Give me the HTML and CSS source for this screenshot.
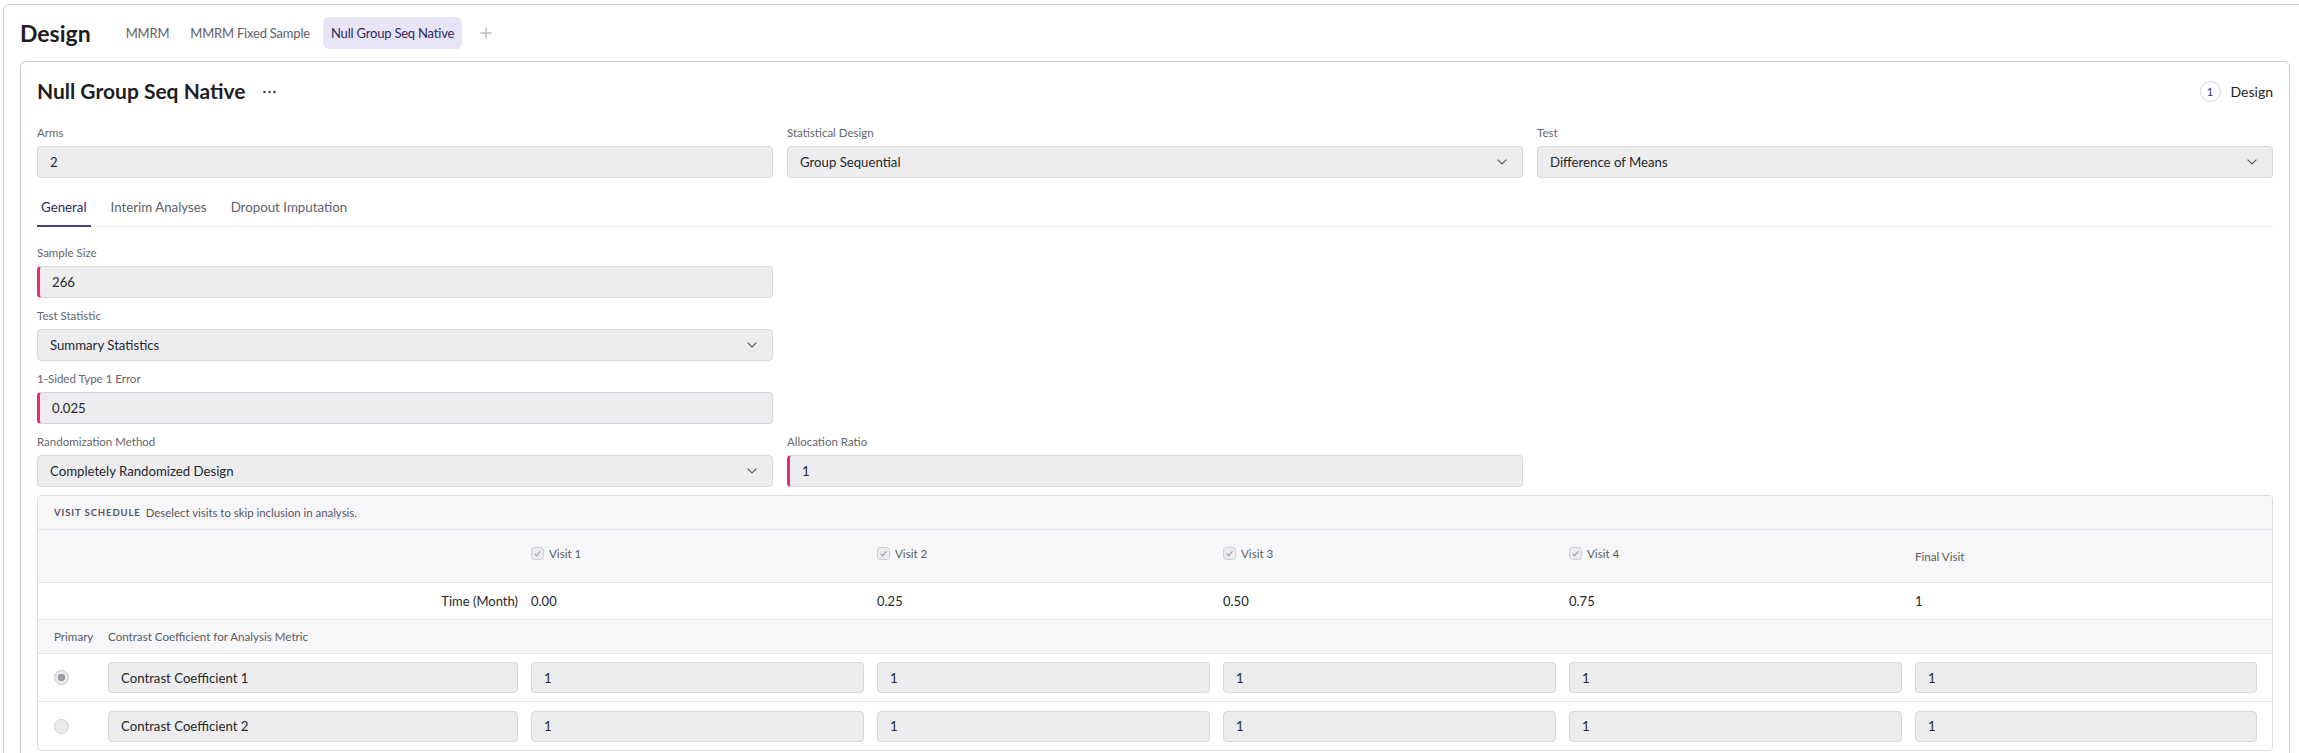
FILE: index.html
```html
<!DOCTYPE html>
<html lang="en">
<head>
<meta charset="utf-8">
<title>Design</title>
<link rel="stylesheet" href="styles.css">
</head>
<body>
<div class="frame">
  <header class="topbar">
    <h1 class="page-title">Design</h1>
    <nav class="doc-tabs">
      <span class="doc-tab">MMRM</span>
      <span class="doc-tab">MMRM Fixed Sample</span>
      <span class="doc-tab active">Null Group Seq Native</span>
      <span class="doc-add"><svg width="12" height="12" viewBox="0 0 12 12"><path d="M6 0.5v11M0.5 6h11" stroke="#bdbdc2" stroke-width="1.4" fill="none"/></svg></span>
    </nav>
  </header>

  <section class="card">
    <div class="card-head">
      <div class="card-title">
        <h2>Null Group Seq Native</h2>
        <span class="more"><svg width="13" height="4" viewBox="0 0 13 4"><circle cx="1.5" cy="2" r="1.3" fill="#444"/><circle cx="6.5" cy="2" r="1.3" fill="#444"/><circle cx="11.5" cy="2" r="1.3" fill="#444"/></svg></span>
      </div>
      <div class="step"><span class="step-num">1</span><span class="step-label">Design</span></div>
    </div>

    <div class="grid3 top-fields">
      <div class="field">
        <div class="label">Arms</div>
        <div class="input">2</div>
      </div>
      <div class="field">
        <div class="label">Statistical Design</div>
        <div class="input select"><span>Group Sequential</span><svg class="chev" width="10" height="6" viewBox="0 0 10 6"><path d="M0.6 0.6l4.4 4.4 4.4-4.4" fill="none" stroke="#555" stroke-width="1.1"/></svg></div>
      </div>
      <div class="field">
        <div class="label">Test</div>
        <div class="input select"><span>Difference of Means</span><svg class="chev" width="10" height="6" viewBox="0 0 10 6"><path d="M0.6 0.6l4.4 4.4 4.4-4.4" fill="none" stroke="#555" stroke-width="1.1"/></svg></div>
      </div>
    </div>

    <div class="sub-tabs">
      <span class="sub-tab active">General</span>
      <span class="sub-tab">Interim Analyses</span>
      <span class="sub-tab">Dropout Imputation</span>
    </div>

    <div class="form-rows">
      <div class="grid3">
        <div class="field">
          <div class="label">Sample Size</div>
          <div class="input required">266</div>
        </div>
      </div>
      <div class="grid3">
        <div class="field">
          <div class="label">Test Statistic</div>
          <div class="input select"><span>Summary Statistics</span><svg class="chev" width="10" height="6" viewBox="0 0 10 6"><path d="M0.6 0.6l4.4 4.4 4.4-4.4" fill="none" stroke="#555" stroke-width="1.1"/></svg></div>
        </div>
      </div>
      <div class="grid3">
        <div class="field">
          <div class="label">1-Sided Type 1 Error</div>
          <div class="input required">0.025</div>
        </div>
      </div>
      <div class="grid3">
        <div class="field">
          <div class="label">Randomization Method</div>
          <div class="input select"><span>Completely Randomized Design</span><svg class="chev" width="10" height="6" viewBox="0 0 10 6"><path d="M0.6 0.6l4.4 4.4 4.4-4.4" fill="none" stroke="#555" stroke-width="1.1"/></svg></div>
        </div>
        <div class="field">
          <div class="label">Allocation Ratio</div>
          <div class="input required">1</div>
        </div>
      </div>
    </div>

    <div class="visit-box">
      <div class="vhead"><span class="vhead-title">VISIT SCHEDULE</span><span class="vhead-desc">Deselect visits to skip inclusion in analysis.</span></div>

      <div class="vrow vgrid visits">
        <span></span><span></span>
        <span class="visit"><svg class="cb" width="13" height="13" viewBox="0 0 13 13"><rect x="0.5" y="0.5" width="12" height="12" rx="3" fill="#ececee" stroke="#cfcfd3"/><path d="M3.6 6.8l2 1.9 3.8-4.3" fill="none" stroke="#9a9a9f" stroke-width="1.1"/></svg>Visit 1</span>
        <span class="visit"><svg class="cb" width="13" height="13" viewBox="0 0 13 13"><rect x="0.5" y="0.5" width="12" height="12" rx="3" fill="#ececee" stroke="#cfcfd3"/><path d="M3.6 6.8l2 1.9 3.8-4.3" fill="none" stroke="#9a9a9f" stroke-width="1.1"/></svg>Visit 2</span>
        <span class="visit"><svg class="cb" width="13" height="13" viewBox="0 0 13 13"><rect x="0.5" y="0.5" width="12" height="12" rx="3" fill="#ececee" stroke="#cfcfd3"/><path d="M3.6 6.8l2 1.9 3.8-4.3" fill="none" stroke="#9a9a9f" stroke-width="1.1"/></svg>Visit 3</span>
        <span class="visit"><svg class="cb" width="13" height="13" viewBox="0 0 13 13"><rect x="0.5" y="0.5" width="12" height="12" rx="3" fill="#ececee" stroke="#cfcfd3"/><path d="M3.6 6.8l2 1.9 3.8-4.3" fill="none" stroke="#9a9a9f" stroke-width="1.1"/></svg>Visit 4</span>
        <span class="visit final">Final Visit</span>
      </div>

      <div class="vrow vgrid times">
        <span></span>
        <span class="time-label">Time (Month)</span>
        <span>0.00</span><span>0.25</span><span>0.50</span><span>0.75</span><span>1</span>
      </div>

      <div class="vrow vgrid colhead">
        <span>Primary</span>
        <span>Contrast Coefficient for Analysis Metric</span>
        <span></span><span></span><span></span><span></span><span></span>
      </div>

      <div class="vrow vgrid coef">
        <span class="radio checked"></span>
        <div class="input small">Contrast Coefficient 1</div>
        <div class="input small">1</div>
        <div class="input small">1</div>
        <div class="input small">1</div>
        <div class="input small">1</div>
        <div class="input small">1</div>
      </div>

      <div class="vrow vgrid coef last">
        <span class="radio"></span>
        <div class="input small">Contrast Coefficient 2</div>
        <div class="input small">1</div>
        <div class="input small">1</div>
        <div class="input small">1</div>
        <div class="input small">1</div>
        <div class="input small">1</div>
      </div>
    </div>
  </section>
</div>
</body>
</html>
```

FILE: styles.css
```css
html, body {
  overflow: hidden;
}

body {
  margin: 0;
  background: #ffffff;
  color: #222226;
  font-family: Lato, "Liberation Sans", sans-serif;
}

.frame {
  box-sizing: border-box;
  width: 2304px;
  margin: 4px 0 0 3px;
  padding: 12px 16px 16px;
  border: 1px solid #cbc5e9;
  border-radius: 6px;
}

/* top bar */
.topbar {
  display: flex;
  align-items: center;
  height: 32px;
}

.page-title {
  margin: 0 27px 0 0;
  font-size: 23px;
  font-weight: 700;
  line-height: 32px;
  color: #1e1e22;
}

.doc-tabs {
  display: flex;
  align-items: center;
  gap: 5px;
  height: 32px;
}

.doc-tab {
  display: flex;
  align-items: center;
  height: 32px;
  padding: 0 8px;
  border-radius: 6px;
  font-size: 13px;
  letter-spacing: -0.2px;
  color: #5f5f68;
}

.doc-tab.active {
  background: #e8e4f6;
  color: #2d2960;
}

.doc-add {
  display: flex;
  align-items: center;
  margin-left: 13px;
}

/* card */
.card {
  margin-top: 12px;
  padding: 14px 16px 16px;
  border: 1px solid #cdc7ea;
  border-radius: 6px;
}

.card-head {
  display: flex;
  align-items: center;
  justify-content: space-between;
  height: 30px;
}

.card-title {
  display: flex;
  align-items: center;
  gap: 17px;
}

.card-title h2 {
  margin: 0;
  font-size: 21px;
  font-weight: 700;
  line-height: 30px;
  color: #1e1e22;
}

.more {
  display: flex;
  align-items: center;
  padding-top: 2px;
}

.step {
  display: flex;
  align-items: center;
  gap: 10px;
}

.step-num {
  box-sizing: border-box;
  display: flex;
  align-items: center;
  justify-content: center;
  width: 21px;
  height: 21px;
  border: 1.5px solid #d6d2ef;
  border-radius: 50%;
  font-size: 12px;
  color: #3a3482;
}

.step-label {
  font-size: 14px;
  color: #222226;
}

/* fields */
.grid3 {
  display: grid;
  grid-template-columns: repeat(3, 1fr);
  column-gap: 14px;
}

.top-fields {
  margin-top: 19px;
}

.label {
  margin-bottom: 5px;
  font-size: 11.5px;
  line-height: 16px;
  color: #66666e;
}

.input {
  box-sizing: border-box;
  display: flex;
  align-items: center;
  height: 32px;
  padding: 0 12px;
  border: 1px solid #d7d7db;
  border-radius: 4px;
  background: #ededf0;
  font-size: 13.2px;
  color: #26262a;
}

.input.required {
  border-left: 3px solid #e42d76;
}

.input.select {
  justify-content: space-between;
  padding-right: 15px;
}

.chev {
  flex: none;
}

/* sub tabs */
.sub-tabs {
  display: flex;
  gap: 16px;
  margin-top: 16px;
  box-shadow: inset 0 -1px 0 #ececf0;
}

.sub-tab {
  padding: 3px 4px 8px;
  border-bottom: 2px solid transparent;
  font-size: 13.3px;
  line-height: 20px;
  color: #606068;
}

.sub-tab.active {
  border-bottom-color: #473e80;
  color: #2d2960;
}

.form-rows {
  display: flex;
  flex-direction: column;
  gap: 10px;
  margin-top: 18px;
}

/* visit schedule */
.visit-box {
  margin-top: 8px;
  border: 1px solid #dcdce1;
  border-radius: 4px;
  overflow: hidden;
}

.vhead {
  box-sizing: border-box;
  display: flex;
  align-items: center;
  gap: 5px;
  height: 34px;
  padding-left: 16px;
  background: #f7f7f9;
  border-bottom: 1px solid #e6e6ea;
}

.vhead-title {
  font-size: 9.5px;
  font-weight: 700;
  letter-spacing: 0.9px;
  color: #55555d;
}

.vhead-desc {
  font-size: 11.4px;
  color: #55555d;
}

.vrow {
  box-sizing: border-box;
  border-bottom: 1px solid #e6e6ea;
}

.vgrid {
  display: grid;
  grid-template-columns: 41px 410px repeat(4, 333px) 1fr;
  column-gap: 13px;
  align-items: center;
  padding: 0 15px 0 16px;
}

.visits {
  height: 53px;
  padding-bottom: 5px;
  background: #f7f7f9;
  font-size: 11.6px;
  color: #5a5a62;
}

.visit {
  display: flex;
  align-items: center;
  gap: 5px;
}

.visit.final {
  padding-top: 5px;
}

.times {
  height: 37px;
  font-size: 13px;
  color: #26262a;
}

.time-label {
  text-align: right;
}

.colhead {
  height: 34px;
  background: #f7f7f9;
  font-size: 11.6px;
  color: #5a5a62;
}

.coef {
  height: 48px;
}

.coef.last {
  border-bottom: none;
}

.input.small {
  height: 31px;
}

.radio {
  box-sizing: border-box;
  display: block;
  width: 15px;
  height: 15px;
  border: 1px solid #d2d2d6;
  border-radius: 50%;
  background: #ebebee;
}

.radio.checked {
  background: radial-gradient(circle, #9c9ca2 0 3.5px, #ebebee 4px);
  border-color: #c8c8cd;
}
```
